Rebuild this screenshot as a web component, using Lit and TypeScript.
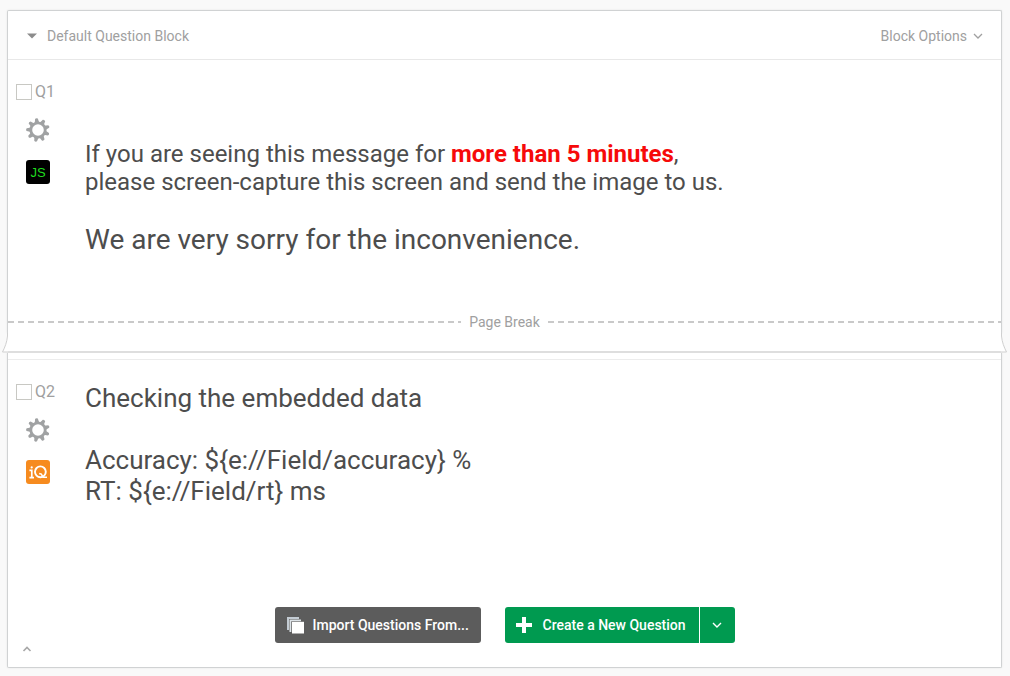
import { LitElement, html, css, svg } from "lit";
import { customElement, property } from "lit/decorators.js";

const teeth = [0, 40, 80, 120, 160, 200, 240, 280, 320];

@customElement("question-rail")
class QuestionRail extends LitElement {
  @property() label = "";
  @property() badge = "";

  static styles = css`
    :host { display: block; }
    .pick { display: flex; align-items: center; gap: 3px; height: 20px; font-size: 16px; line-height: 20px; color: #a0a0a0; }
    .box { appearance: none; box-sizing: border-box; width: 16px; height: 16px; margin: 0; border: 1px solid #c8c8c3; background: #fff; }
    .box:checked { background: #a0a0a0; }
    .tools { display: flex; flex-direction: column; align-items: center; width: 44px; gap: 18px; padding-top: 16px; }
    .tool { display: block; padding: 0; border: 0; background: none; width: 24px; height: 24px; cursor: pointer; }
    svg { display: block; }
    .badge { border-radius: 3px; text-align: center; }
    .js { background: #000; color: #1fdb1f; font: 13px/26px "Liberation Sans", Arial, sans-serif; }
    .iq { background: #f68b1f; }
  `;

  render() {
    return html`
      <label class="pick"><input class="box" type="checkbox" /><span>${this.label}</span></label>
      <div class="tools">
        <button class="tool" aria-label="Question options">
          <svg width="24" height="24" viewBox="0 0 24 24" fill="#a0a2a3">
            ${teeth.map((a) => svg`<path transform="rotate(${a - 8} 12 12)" d="M9.7 5 L10.6 0.7 Q12 -0.5 13.4 0.7 L14.3 5Z" />`)}
            <circle cx="12" cy="12" r="7.2" fill="#fff" stroke="#a0a2a3" stroke-width="2.8" />
          </svg>
        </button>
        ${this.badge === "js"
          ? html`<button class="tool badge js">JS</button>`
          : html`<button class="tool badge iq" aria-label="iQ">
              <svg width="24" height="24" viewBox="0 0 24 24" fill="none" stroke="#fff">
                <path d="M3.4 10.3H5.8V17.5M3.4 17.6H8" stroke-width="1.7" />
                <circle cx="5.7" cy="7.4" r="1.1" fill="#fff" stroke="none" />
                <circle cx="14.4" cy="11.8" r="5.4" stroke-width="1.9" />
                <path d="M13.2 13.4L15.3 14.1L17.2 17.3H21" stroke-width="1.6" />
              </svg>
            </button>`}
      </div>
    `;
  }
}

@customElement("app-root")
class AppRoot extends LitElement {
  static styles = css`
    :host { display: block; box-sizing: border-box; min-height: 100vh; padding: 10px 8px 8px 7px; background: #f9f9f9; font-family: Roboto, "Liberation Sans", sans-serif; font-size: 14px; color: #a0a0a0; }
    button { font-family: inherit; font-size: 14px; cursor: pointer; }
    svg { display: block; flex: none; }
    .panel { background: #fff; border: 1px solid #d0d2d3; box-shadow: 0 0 2px #e4e4e4; }
    .top { border-bottom: 0; border-radius: 2px 2px 0 0; }
    .bottom { border-top: 0; border-radius: 0 0 2px 2px; padding-top: 6px; }
    .header { display: flex; justify-content: space-between; align-items: center; height: 48px; padding: 0 18px 0 19px; border-bottom: 1px solid #e8e8e8; }
    .plain { display: flex; align-items: center; padding: 0; border: 0; background: none; color: #a0a0a0; line-height: 20px; }
    .header .plain { padding-top: 2px; }
    .title { gap: 10px; }
    .options { gap: 6px; }
    .question { display: grid; grid-template-columns: 69px 1fr; padding: 22px 8px 0; color: #4d4d4d; }
    .first { min-height: 229px; }
    .second { min-height: 194px; border-top: 1px solid #ececec; }
    .text { font-size: 24px; line-height: 28px; }
    .text p { margin: 0; }
    .message { padding-top: 58px; }
    .message .sorry { padding-top: 28px; font-size: 28px; line-height: 32px; }
    .text .fields { padding-top: 1px; font-size: 26px; line-height: 31px; }
    .text .data { padding-top: 31px; }
    .alert { color: #f60a0a; }
    .break { display: flex; align-items: center; height: 22px; gap: 8px; }
    .dash { flex: 1; height: 2px; background: repeating-linear-gradient(90deg, #c9c9c9 0 6px, transparent 6px 10px); }
    .curl { display: flex; margin: 0 -6px; height: 20px; }
    .edge { flex: 1; background: #fff; border-bottom: 2px solid #dedede; box-sizing: border-box; }
    .actions { display: flex; justify-content: center; gap: 24px; padding-top: 31px; }
    .btn { display: flex; align-items: center; height: 36px; border: 0; color: #fff; font-weight: 500; white-space: nowrap; }
    .import { width: 206px; padding: 0 12px; gap: 9px; background: #5c5c5c; border-radius: 3px; }
    .split { display: flex; gap: 1px; }
    .create { width: 194px; padding: 0 10px; gap: 10px; background: #009a50; border-radius: 3px 0 0 3px; }
    .more { width: 35px; padding: 0; justify-content: center; background: #009a50; border-radius: 0 3px 3px 0; }
    .footer { display: flex; padding: 1px 14px 13px; }
    .collapse { height: 10px; }
  `;

  render() {
    return html`
      <section class="panel top">
        <header class="header">
          <button class="plain title">
            <svg width="10" height="6" viewBox="0 0 10 6"><path d="M0 .5H10L5 5.5Z" fill="#8c8c8c" /></svg>
            Default Question Block
          </button>
          <button class="plain options">
            Block Options
            <svg width="10" height="8" viewBox="0 0 10 8" fill="none" stroke="#a0a0a0" stroke-width="1.3"><path d="M1 2L5 6L9 2" /></svg>
          </button>
        </header>
        <article class="question first">
          <question-rail label="Q1" badge="js"></question-rail>
          <div class="text message">
            <p>If you are seeing this message for <b class="alert">more than 5 minutes</b>,<br />please screen-capture this screen and send the image to us.</p>
            <p class="sorry">We are very sorry for the inconvenience.</p>
          </div>
        </article>
        <div class="break"><span class="dash"></span><span>Page Break</span><span class="dash"></span></div>
      </section>
      <div class="curl">
        <svg width="7" height="20" viewBox="0 0 7 20"><path d="M6.5 0V3C6 9 4 14 1.5 19H7V0Z" fill="#fff" /><path d="M6.5 0V3C6 9 4 14 1.5 19H7" fill="none" stroke="#cfcfcf" /></svg>
        <div class="edge"></div>
        <svg width="7" height="20" viewBox="0 0 7 20"><path d="M.5 0V3C1 9 3 14 5.5 19H0V0Z" fill="#fff" /><path d="M.5 0V3C1 9 3 14 5.5 19H0" fill="none" stroke="#cfcfcf" /></svg>
      </div>
      <section class="panel bottom">
        <article class="question second">
          <question-rail label="Q2" badge="iq"></question-rail>
          <div class="text">
            <p class="fields">Checking the embedded data</p>
            <p class="fields data">Accuracy: \${e://Field/accuracy} %<br />RT: \${e://Field/rt} ms</p>
          </div>
        </article>
        <div class="actions">
          <button class="btn import">
            <svg width="17" height="17" viewBox="0 0 17 17"><path d="M0 0H12V2H2V13H0Z" fill="#c3cbd3" /><path d="M2.5 2.5H14V4.2H4.3V15H2.5Z" fill="#dde3e8" /><path d="M5 4.8H17V16.5H5Z" fill="#fff" /></svg>
            Import Questions From...
          </button>
          <div class="split">
            <button class="btn create">
              <svg width="18" height="18" viewBox="0 0 18 18"><path d="M7 1H11V7H17V11H11V17H7V11H1V7H7Z" fill="#fff" /></svg>
              Create a New Question
            </button>
            <button class="btn more" aria-label="More question types">
              <svg width="10" height="8" viewBox="0 0 10 8" fill="none" stroke="#fff" stroke-width="1.4"><path d="M1 2L5 6L9 2" /></svg>
            </button>
          </div>
        </div>
        <footer class="footer">
          <button class="plain collapse" aria-label="Collapse block">
            <svg width="10" height="8" viewBox="0 0 10 8" fill="none" stroke="#a8a8a8" stroke-width="1.6"><path d="M1.5 6L5 2.5L8.5 6" /></svg>
          </button>
        </footer>
      </section>
    `;
  }
}
